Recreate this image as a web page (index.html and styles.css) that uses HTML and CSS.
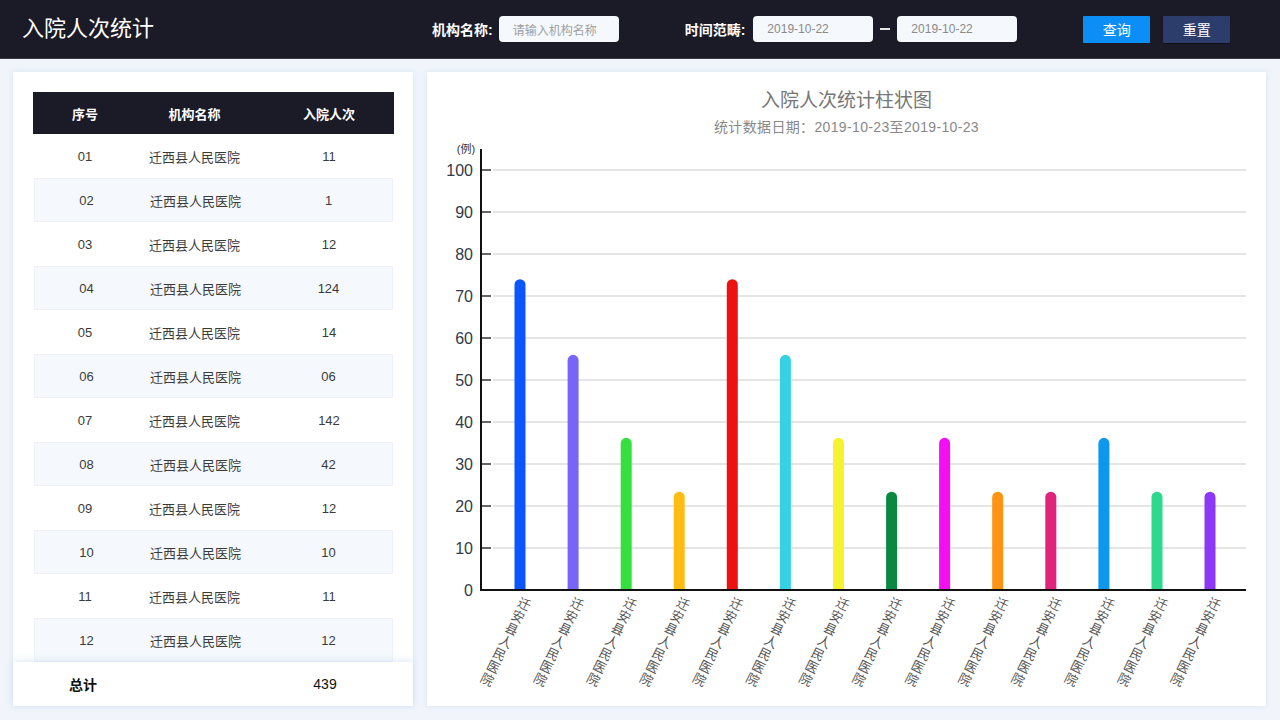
FILE: index.html
```html
<!DOCTYPE html>
<html lang="zh-CN">
<head>
<meta charset="utf-8">
<title>入院人次统计</title>
<link rel="stylesheet" href="styles.css">
</head>
<body>
<header class="topbar">
  <h1 class="title">入院人次统计</h1>
  <div class="group group-org">
    <span class="field-label">机构名称:</span>
    <div class="input placeholder">请输入机构名称</div>
  </div>
  <div class="group group-time">
    <span class="field-label">时间范畴:</span>
    <div class="input">2019-10-22</div>
    <span class="dash"></span>
    <div class="input">2019-10-22</div>
  </div>
  <button class="btn btn-query">查询</button>
  <button class="btn btn-reset">重置</button>
</header>

<main class="main">
  <section class="panel left">
    <div class="table">
      <div class="thead">
        <div>序号</div><div>机构名称</div><div class="c3">入院人次</div>
      </div>
      <div class="row"><div>01</div><div>迁西县人民医院</div><div class="c3">11</div></div>
      <div class="row alt"><div>02</div><div>迁西县人民医院</div><div class="c3">1</div></div>
      <div class="row"><div>03</div><div>迁西县人民医院</div><div class="c3">12</div></div>
      <div class="row alt"><div>04</div><div>迁西县人民医院</div><div class="c3">124</div></div>
      <div class="row"><div>05</div><div>迁西县人民医院</div><div class="c3">14</div></div>
      <div class="row alt"><div>06</div><div>迁西县人民医院</div><div class="c3">06</div></div>
      <div class="row"><div>07</div><div>迁西县人民医院</div><div class="c3">142</div></div>
      <div class="row alt"><div>08</div><div>迁西县人民医院</div><div class="c3">42</div></div>
      <div class="row"><div>09</div><div>迁西县人民医院</div><div class="c3">12</div></div>
      <div class="row alt"><div>10</div><div>迁西县人民医院</div><div class="c3">10</div></div>
      <div class="row"><div>11</div><div>迁西县人民医院</div><div class="c3">11</div></div>
      <div class="row alt"><div>12</div><div>迁西县人民医院</div><div class="c3">12</div></div>
    </div>
    <div class="total">
      <div class="total-label">总计</div><div></div><div class="c3 total-num">439</div>
    </div>
  </section>

  <section class="panel right">
    <h2 class="chart-title">入院人次统计柱状图</h2>
    <p class="chart-sub">统计数据日期：2019-10-23至2019-10-23</p>
    <svg class="chart" width="839" height="568" viewBox="0 0 839 568" xmlns="http://www.w3.org/2000/svg">
      <g class="grid">
        <line x1="66" y1="410" x2="819" y2="410"/>
        <line x1="66" y1="368" x2="819" y2="368"/>
        <line x1="66" y1="326" x2="819" y2="326"/>
        <line x1="66" y1="284" x2="819" y2="284"/>
        <line x1="66" y1="242" x2="819" y2="242"/>
        <line x1="66" y1="200" x2="819" y2="200"/>
        <line x1="66" y1="158" x2="819" y2="158"/>
        <line x1="66" y1="116" x2="819" y2="116"/>
        <line x1="66" y1="74" x2="819" y2="74"/>
        <line x1="66" y1="32" x2="819" y2="32"/>
      </g>
      <g class="ticks">
        <line x1="55" y1="410" x2="64" y2="410"/>
        <line x1="55" y1="368" x2="64" y2="368"/>
        <line x1="55" y1="326" x2="64" y2="326"/>
        <line x1="55" y1="284" x2="64" y2="284"/>
        <line x1="55" y1="242" x2="64" y2="242"/>
        <line x1="55" y1="200" x2="64" y2="200"/>
        <line x1="55" y1="158" x2="64" y2="158"/>
        <line x1="55" y1="116" x2="64" y2="116"/>
        <line x1="55" y1="74" x2="64" y2="74"/>
        <line x1="55" y1="32" x2="64" y2="32"/>
      </g>
      <g class="ylabels">
        <text x="46" y="458">0</text>
        <text x="46" y="416">10</text>
        <text x="46" y="374">20</text>
        <text x="46" y="332">30</text>
        <text x="46" y="290">40</text>
        <text x="46" y="248">50</text>
        <text x="46" y="206">60</text>
        <text x="46" y="164">70</text>
        <text x="46" y="122">80</text>
        <text x="46" y="80">90</text>
        <text x="46" y="38">100</text>
      </g>
      <text class="unit" x="39" y="15">(例)</text>
      <g class="bars">
        <path fill="#0a55fd" d="M87.5 452 V146.7 A5.5 5.5 0 0 1 98.5 146.7 V452 Z"/>
        <path fill="#7766f6" d="M140.6 452 V222.3 A5.5 5.5 0 0 1 151.6 222.3 V452 Z"/>
        <path fill="#35e03e" d="M193.7 452 V305.3 A5.5 5.5 0 0 1 204.7 305.3 V452 Z"/>
        <path fill="#ffbc13" d="M246.7 452 V359.2 A5.5 5.5 0 0 1 257.7 359.2 V452 Z"/>
        <path fill="#ee1111" d="M299.8 452 V146.7 A5.5 5.5 0 0 1 310.8 146.7 V452 Z"/>
        <path fill="#35d2e6" d="M352.9 452 V222.3 A5.5 5.5 0 0 1 363.9 222.3 V452 Z"/>
        <path fill="#f6f22e" d="M406 452 V305.3 A5.5 5.5 0 0 1 417 305.3 V452 Z"/>
        <path fill="#0a8840" d="M459.1 452 V359.2 A5.5 5.5 0 0 1 470.1 359.2 V452 Z"/>
        <path fill="#f30ef3" d="M512.1 452 V305.3 A5.5 5.5 0 0 1 523.1 305.3 V452 Z"/>
        <path fill="#ff9313" d="M565.2 452 V359.2 A5.5 5.5 0 0 1 576.2 359.2 V452 Z"/>
        <path fill="#e0237d" d="M618.3 452 V359.2 A5.5 5.5 0 0 1 629.3 359.2 V452 Z"/>
        <path fill="#0b98ee" d="M671.4 452 V305.3 A5.5 5.5 0 0 1 682.4 305.3 V452 Z"/>
        <path fill="#2ed98d" d="M724.5 452 V359.2 A5.5 5.5 0 0 1 735.5 359.2 V452 Z"/>
        <path fill="#8c38f6" d="M777.5 452 V359.2 A5.5 5.5 0 0 1 788.5 359.2 V452 Z"/>
      </g>
      <line class="axis" x1="54" y1="11" x2="54" y2="453"/>
      <line class="axis" x1="53" y1="452" x2="819" y2="452"/>
      <g class="xlabels">
        <text x="100" y="460" transform="rotate(26 100 460)">迁安县人民医院</text>
        <text x="153.1" y="460" transform="rotate(26 153.1 460)">迁安县人民医院</text>
        <text x="206.2" y="460" transform="rotate(26 206.2 460)">迁安县人民医院</text>
        <text x="259.2" y="460" transform="rotate(26 259.2 460)">迁安县人民医院</text>
        <text x="312.3" y="460" transform="rotate(26 312.3 460)">迁安县人民医院</text>
        <text x="365.4" y="460" transform="rotate(26 365.4 460)">迁安县人民医院</text>
        <text x="418.5" y="460" transform="rotate(26 418.5 460)">迁安县人民医院</text>
        <text x="471.6" y="460" transform="rotate(26 471.6 460)">迁安县人民医院</text>
        <text x="524.6" y="460" transform="rotate(26 524.6 460)">迁安县人民医院</text>
        <text x="577.7" y="460" transform="rotate(26 577.7 460)">迁安县人民医院</text>
        <text x="630.8" y="460" transform="rotate(26 630.8 460)">迁安县人民医院</text>
        <text x="683.9" y="460" transform="rotate(26 683.9 460)">迁安县人民医院</text>
        <text x="737" y="460" transform="rotate(26 737 460)">迁安县人民医院</text>
        <text x="790" y="460" transform="rotate(26 790 460)">迁安县人民医院</text>
      </g>
    </svg>
  </section>
</main>
</body>
</html>
```

FILE: styles.css
```css
html, body {
  margin: 0;
  padding: 0;
}
body {
  width: 1280px;
  height: 720px;
  overflow: hidden;
  background: #f1f5fb;
  font-family: "Liberation Sans", "Noto Sans CJK SC", sans-serif;
  color: #333;
}

/* ---------- top bar ---------- */
.topbar {
  height: 59px;
  box-sizing: border-box;
  background: #1b1b27;
  border-bottom: 1px solid #3b3b45;
  display: flex;
  align-items: center;
  padding-left: 22px;
}
.title {
  margin: 0;
  font-size: 22px;
  font-weight: normal;
  color: #fff;
  line-height: 30px;
}
.group {
  display: flex;
  align-items: center;
}
.group-org {
  margin-left: 278px;
}
.group-time {
  margin-left: 66px;
}
.field-label {
  font-size: 14px;
  font-weight: bold;
  color: #fff;
  margin-right: 6px;
  white-space: nowrap;
}
.group-time .field-label {
  margin-right: 8px;
}
.input {
  width: 120px;
  height: 26px;
  box-sizing: border-box;
  background: #f5f8fc;
  border-radius: 4px;
  font-size: 12px;
  color: #8a8a8a;
  padding-left: 14px;
  display: flex;
  align-items: center;
}
.input.placeholder {
  color: #a0a0a0;
}
.dash {
  width: 10px;
  height: 2px;
  background: #e6e6e6;
  margin: 0 7px;
}
.btn {
  height: 27px;
  width: 67px;
  border: none;
  border-radius: 1px;
  font-family: inherit;
  font-size: 14px;
  color: #fff;
  padding: 0;
}
.btn-query {
  margin-left: 66px;
  background: #0b8ff7;
}
.btn-reset {
  margin-left: 13px;
  background: #2c3d6b;
  box-shadow: 0 1px 1px rgba(0, 0, 0, 0.4);
}

/* ---------- main ---------- */
.main {
  display: flex;
  gap: 14px;
  padding: 13px 14px 14px 13px;
}
.panel {
  background: #fff;
  height: 634px;
  box-shadow: 0 0 6px rgba(170, 195, 230, 0.35);
}
.left {
  width: 400px;
  display: flex;
  flex-direction: column;
}
.table {
  flex: 1;
  margin: 20px 19px 0 20px;
}
.thead,
.row,
.total {
  display: grid;
  grid-template-columns: 104px 115px 1fr;
  align-items: center;
  text-align: center;
}
.c3 {
  padding-left: 12px;
}
.thead {
  height: 42px;
  background: #1b1b27;
  color: #fff;
  font-size: 13px;
  font-weight: bold;
}
.row {
  height: 44px;
  box-sizing: border-box;
  font-size: 13px;
  color: #3a3a3a;
}
.row.alt {
  background: #f5f9fd;
  border: 1px solid #edf2f8;
  margin: 0 1px;
  grid-template-columns: 103px 115px 1fr;
}
.total {
  height: 44px;
  padding-left: 18px;
  padding-right: 19px;
  box-shadow: 0 -2px 6px rgba(170, 195, 230, 0.3);
  font-size: 14px;
  color: #111;
}
.total-label {
  font-weight: bold;
}
.total-num {
  padding-left: 6px;
}

/* ---------- chart panel ---------- */
.right {
  flex: 1;
  padding-top: 16px;
  box-sizing: border-box;
  text-align: center;
}
.chart-title {
  margin: 0;
  font-size: 19px;
  line-height: 26px;
  font-weight: normal;
  color: #777;
}
.chart-sub {
  margin: 4px 0 0;
  font-size: 14px;
  line-height: 18px;
  color: #888;
  letter-spacing: 0.35px;
}
.chart {
  display: block;
  margin-top: 2px;
}
.grid line {
  stroke: #dcdcdc;
  stroke-width: 1.6;
}
.ticks line {
  stroke: #333;
  stroke-width: 1.5;
}
.axis {
  stroke: #111;
  stroke-width: 2;
}
.ylabels text {
  font-family: "Liberation Sans", sans-serif;
  font-size: 16px;
  fill: #333a48;
  text-anchor: end;
}
.unit {
  font-family: "Liberation Sans", "Noto Sans CJK SC", sans-serif;
  font-size: 11px;
  fill: #333;
  text-anchor: middle;
}
.xlabels text {
  font-family: "Noto Sans CJK SC", sans-serif;
  font-size: 13px;
  fill: #555;
  writing-mode: vertical-rl;
  letter-spacing: 1px;
}
```
